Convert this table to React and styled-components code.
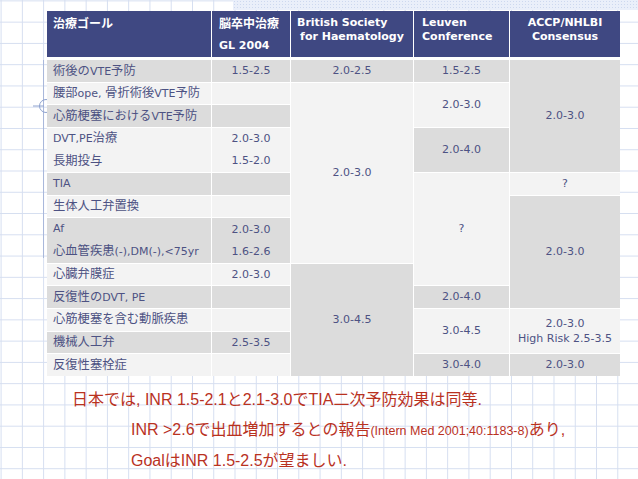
import React from 'react';
import styled, { createGlobalStyle } from 'styled-components';

const Global = createGlobalStyle`
  html, body { margin: 0; padding: 0; }
  body {
    width: 638px;
    height: 479px;
    overflow: hidden;
    background-color: #ffffff;
    background-image:
      linear-gradient(to right, #d5def0 1px, transparent 1px),
      linear-gradient(to bottom, #d5def0 1px, transparent 1px);
    background-size: 21.27px 21.27px;
    background-position: 0.6px 0.4px;
    font-family: "DejaVu Sans", "Noto Sans CJK JP", sans-serif;
  }
`;

const Page = styled.div`
  position: relative;
  width: 638px;
  height: 479px;
  overflow: hidden;
`;

const TopBand = styled.div`
  margin-left: 233px;
  height: 10px;
  margin-bottom: 1px;
  background-color: #eaeffa;
  background-image: radial-gradient(#cdd8ef 0.7px, transparent 0.9px);
  background-size: 3px 3px;
`;

const Table = styled.div`
  position: relative;
  z-index: 1;
  margin-left: 47px;
  width: 573px;
  display: grid;
  grid-template-columns: 164px 78px 122px 95px 110px;
  grid-template-rows: 48px repeat(14, 21.64px);
  gap: 1px;
  background: #ffffff;
`;

const Th = styled.div`
  background: #3f4882;
  color: #ffffff;
  font-weight: bold;
  font-size: 11px;
  margin-bottom: 2px;
  padding: ${p => (p.$tall ? '0.5px' : '5px')} ${p => p.$pad || 6}px 0;
  line-height: ${p => (p.$tall ? '21px' : '14px')};
  text-align: ${p => p.$align || 'left'};
  white-space: nowrap;
`;

const HLine = styled.div`
  text-align: ${p => p.$align || 'inherit'};
`;

const Td = styled.div`
  grid-column: ${p => p.$c};
  grid-row: ${p => p.$r} / span ${p => p.$s || 1};
  background: ${p => (p.$dark ? '#dcdcdc' : '#f3f3f3')};
  color: #4d5283;
  font-size: 11px;
  display: flex;
  flex-direction: column;
  justify-content: center;
  align-items: ${p => (p.$left ? 'flex-start' : 'center')};
  padding: 0 6px;
  line-height: ${p => p.$lh || 21.64}px;
  white-space: nowrap;
`;

const Cjk = styled.span`
  font-family: "Noto Sans CJK JP", sans-serif;
  font-size: ${p => p.$size || '12.3px'};
`;

const cjkRe = /([\u3000-\u30ff\u3400-\u9fff\uff00-\uffef]+)/;
function Mixed({ text, size }) {
  return text
    .split(cjkRe)
    .map((part, i) => (i % 2 ? <Cjk key={i} $size={size}>{part}</Cjk> : part));
}

const Note = styled.div`
  margin-top: 9px;
  color: #b9321f;
  font-family: "Liberation Sans Narrow", "Liberation Sans", "Noto Sans CJK JP", sans-serif;
  font-size: 16px;
`;

const NoteLine = styled.div`
  padding-left: ${p => p.$indent}px;
  line-height: 30px;
  white-space: nowrap;
`;

const Small = styled.span`
  font-size: 12.5px;
`;

const Deco = styled.svg`
  position: absolute;
  left: 0;
  top: 0;
  pointer-events: none;
`;

const rows = [
  { u: 2, s: 1, d: true, label: ['術後のVTE予防'], gl: ['1.5-2.5'] },
  { u: 3, s: 1, d: false, label: ['腰部ope, 骨折術後VTE予防'], gl: [] },
  { u: 4, s: 1, d: true, label: ['心筋梗塞におけるVTE予防'], gl: [] },
  { u: 5, s: 2, d: false, label: ['DVT,PE治療', '長期投与'], gl: ['2.0-3.0', '1.5-2.0'] },
  { u: 7, s: 1, d: true, label: ['TIA'], gl: [] },
  { u: 8, s: 1, d: false, label: ['生体人工弁置換'], gl: [] },
  { u: 9, s: 2, d: true, label: ['Af', '心血管疾患(-),DM(-),<75yr'], gl: ['2.0-3.0', '1.6-2.6'] },
  { u: 11, s: 1, d: false, label: ['心臓弁膜症'], gl: ['2.0-3.0'] },
  { u: 12, s: 1, d: true, label: ['反復性のDVT, PE'], gl: [] },
  { u: 13, s: 1, d: false, label: ['心筋梗塞を含む動脈疾患'], gl: [] },
  { u: 14, s: 1, d: true, label: ['機械人工弁'], gl: ['2.5-3.5'] },
  { u: 15, s: 1, d: false, label: ['反復性塞栓症'], gl: [] },
];

const spans = [
  { c: 3, u: 2, s: 1, d: true, v: ['2.0-2.5'] },
  { c: 3, u: 3, s: 8, d: false, v: ['2.0-3.0'] },
  { c: 3, u: 11, s: 5, d: true, v: ['3.0-4.5'] },
  { c: 4, u: 2, s: 1, d: true, v: ['1.5-2.5'] },
  { c: 4, u: 3, s: 2, d: false, v: ['2.0-3.0'] },
  { c: 4, u: 5, s: 2, d: true, v: ['2.0-4.0'] },
  { c: 4, u: 7, s: 5, d: false, v: ['?'] },
  { c: 4, u: 12, s: 1, d: true, v: ['2.0-4.0'] },
  { c: 4, u: 13, s: 2, d: false, v: ['3.0-4.5'] },
  { c: 4, u: 15, s: 1, d: true, v: ['3.0-4.0'] },
  { c: 5, u: 2, s: 5, d: true, v: ['2.0-3.0'] },
  { c: 5, u: 7, s: 1, d: false, v: ['?'] },
  { c: 5, u: 8, s: 5, d: true, v: ['2.0-3.0'] },
  { c: 5, u: 13, s: 2, d: false, v: ['2.0-3.0', 'High Risk 2.5-3.5'], lh: 15 },
  { c: 5, u: 15, s: 1, d: true, v: ['2.0-3.0'] },
];

export default function App() {
  return (
    <Page>
      <Global />
      <Deco width="60" height="300" viewBox="0 0 60 300">
        <line x1="43.5" y1="60" x2="43.5" y2="258" stroke="#a9b8db" strokeWidth="1" />
        <line x1="33" y1="106" x2="44" y2="106" stroke="#8ea2cf" strokeWidth="1" />
        <circle cx="46" cy="106" r="6.5" fill="none" stroke="#8ea2cf" strokeWidth="1" />
      </Deco>
      <TopBand />
      <Table>
        <Th>
          <Mixed text="治療ゴール" size="12px" />
        </Th>
        <Th $tall $pad={7}>
          <HLine><Mixed text="脳卒中治療" size="12px" /></HLine>
          <HLine>GL 2004</HLine>
        </Th>
        <Th>
          <HLine>British Society</HLine>
          <HLine $align="center">for Haematology</HLine>
        </Th>
        <Th $pad={8}>
          <HLine>Leuven</HLine>
          <HLine>Conference</HLine>
        </Th>
        <Th $align="center">
          <HLine>ACCP/NHLBI</HLine>
          <HLine>Consensus</HLine>
        </Th>

        {rows.map(r => (
          <React.Fragment key={r.u}>
            <Td $c={1} $r={r.u} $s={r.s} $dark={r.d} $left>
              {r.label.map(t => (
                <div key={t}><Mixed text={t} /></div>
              ))}
            </Td>
            <Td $c={2} $r={r.u} $s={r.s} $dark={r.d}>
              {r.gl.map(t => (
                <div key={t}>{t}</div>
              ))}
            </Td>
          </React.Fragment>
        ))}

        {spans.map(sp => (
          <Td key={`${sp.c}-${sp.u}`} $c={sp.c} $r={sp.u} $s={sp.s} $dark={sp.d} $lh={sp.lh}>
            {sp.v.map(t => (
              <div key={t}>{t}</div>
            ))}
          </Td>
        ))}
      </Table>
      <Note>
        <NoteLine $indent={72}>
          日本では, INR 1.5-2.1と2.1-3.0でTIA二次予防効果は同等.
        </NoteLine>
        <NoteLine $indent={131}>
          INR &gt;2.6で出血増加するとの報告<Small>(Intern Med 2001;40:1183-8)</Small>あり,
        </NoteLine>
        <NoteLine $indent={131}>GoalはINR 1.5-2.5が望ましい.</NoteLine>
      </Note>
    </Page>
  );
}
